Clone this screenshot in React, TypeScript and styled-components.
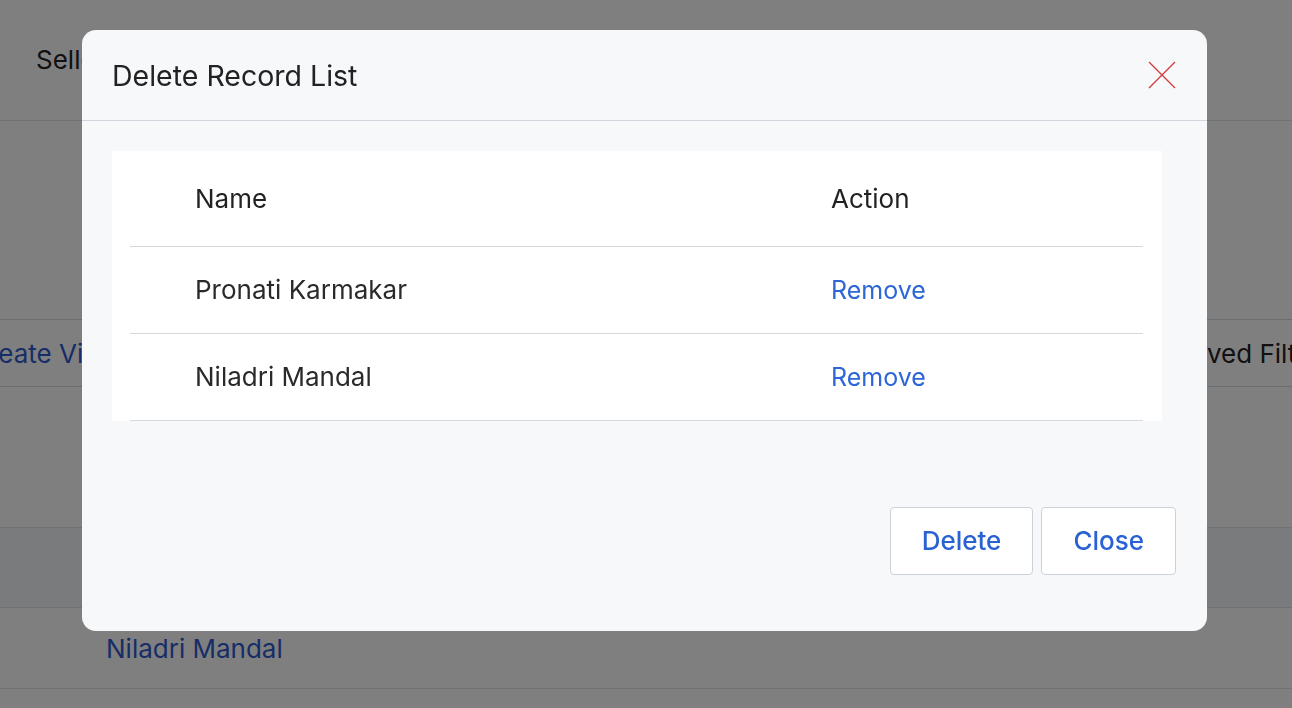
import React from "react";
import styled, { createGlobalStyle } from "styled-components";

const GlobalStyle = createGlobalStyle`
  html, body {
    margin: 0;
    padding: 0;
    overflow: hidden;
    background: #ffffff;
    font-family: Inter, "Noto Sans", "Liberation Sans", sans-serif;
    color: #222;
  }
  * {
    box-sizing: border-box;
  }
`;

const Page = styled.div`
  width: 1292px;
  height: 708px;
  overflow: hidden;
`;

const PageHeader = styled.div`
  height: 121px;
  padding: 44px 0 0 36px;
  border-bottom: 1px solid #dfe3e7;
  font-size: 26px;
`;

const Toolbar = styled.div`
  display: flex;
  justify-content: space-between;
  margin: 198px -54px 0 -55px;
`;

const ToolButton = styled.button<{ $link?: boolean }>`
  height: 68px;
  padding: 0 24px;
  background: #fff;
  border: 1px solid #d6dadf;
  border-radius: 4px;
  font-family: inherit;
  font-size: 26px;
  white-space: nowrap;
  color: ${(p) => (p.$link ? "#2f5bd0" : "#222")};
`;

const ListTable = styled.div`
  margin-top: 140px;
  border-top: 1px solid #dfe3e7;
`;

const ListHead = styled.div`
  height: 80px;
  background: #f4f7f9;
  border-bottom: 1px solid #dfe3e7;
`;

const ListRow = styled.div`
  height: 81px;
  display: flex;
  align-items: center;
  padding-left: 106px;
  border-bottom: 1px solid #dfe3e7;
  font-size: 26px;
  color: #2f5bd0;
`;

const Overlay = styled.div`
  position: fixed;
  inset: 0;
  background: rgba(0, 0, 0, 0.5);
  display: flex;
  align-items: flex-start;
  justify-content: flex-start;
  padding: 30px 0 0 82px;
`;

const Modal = styled.div`
  width: 1125px;
  background: #f7f8fa;
  border-radius: 14px;
  overflow: hidden;
`;

const ModalHeader = styled.div`
  height: 91px;
  display: flex;
  align-items: center;
  justify-content: space-between;
  padding: 0 31px 0 30px;
  border-bottom: 1px solid #cfd6de;
`;

const Title = styled.h2`
  margin: 0;
  font-size: 28.5px;
  font-weight: 400;
  color: #222;
`;

const CloseIcon = styled.button`
  width: 28px;
  height: 28px;
  padding: 0;
  border: none;
  background: transparent;
  display: flex;
  cursor: pointer;
`;

const ModalBody = styled.div`
  padding: 30px 45px 0 30px;
`;

const Card = styled.div`
  background: #fff;
  padding: 0 19px 0 18px;
`;

const Table = styled.table`
  width: 100%;
  border-collapse: collapse;
  font-size: 26px;
`;

const Th = styled.th<{ $w?: number }>`
  height: 95px;
  text-align: left;
  font-weight: 400;
  color: #222;
  padding: 0 0 0 ${(p) => (p.$w ? 65 : 0)}px;
  width: ${(p) => (p.$w ? `${p.$w}px` : "auto")};
  border-bottom: 1px solid #d5d9dd;
`;

const Td = styled.td<{ $first?: boolean }>`
  height: 87px;
  padding: 0 0 0 ${(p) => (p.$first ? 65 : 0)}px;
  color: #2a2a2a;
  border-bottom: 1px solid #d5d9dd;
`;

const LinkText = styled.a`
  font-size: 25px;
  color: #2d66d6;
  text-decoration: none;
  cursor: pointer;
`;

const Footer = styled.div`
  display: flex;
  justify-content: flex-end;
  gap: 8px;
  padding: 86px 31px 56px 30px;
`;

const ActionButton = styled.button`
  height: 68px;
  padding: 0 31px;
  background: #fff;
  border: 1px solid #cdd1d8;
  border-radius: 4px;
  font-family: inherit;
  font-size: 26px;
  font-weight: 500;
  color: #2a62d4;
  cursor: pointer;
`;

const records = ["Pronati Karmakar", "Niladri Mandal"];

export default function App() {
  return (
    <>
      <GlobalStyle />
      <Page>
        <PageHeader>Seller List</PageHeader>
        <Toolbar>
          <ToolButton $link>Create View</ToolButton>
          <ToolButton>Saved Filter</ToolButton>
        </Toolbar>
        <ListTable>
          <ListHead />
          <ListRow>Niladri Mandal</ListRow>
        </ListTable>
      </Page>
      <Overlay>
        <Modal>
          <ModalHeader>
            <Title>Delete Record List</Title>
            <CloseIcon aria-label="Close">
              <svg width="28" height="28" viewBox="0 0 28 28">
                <path d="M1 1 L27 27 M27 1 L1 27" stroke="#d0393b" strokeWidth="1.3" fill="none" />
              </svg>
            </CloseIcon>
          </ModalHeader>
          <ModalBody>
            <Card>
              <Table>
                <thead>
                  <tr>
                    <Th $w={701}>Name</Th>
                    <Th>Action</Th>
                  </tr>
                </thead>
                <tbody>
                  {records.map((r) => (
                    <tr key={r}>
                      <Td $first>{r}</Td>
                      <Td>
                        <LinkText>Remove</LinkText>
                      </Td>
                    </tr>
                  ))}
                </tbody>
              </Table>
            </Card>
          </ModalBody>
          <Footer>
            <ActionButton>Delete</ActionButton>
            <ActionButton>Close</ActionButton>
          </Footer>
        </Modal>
      </Overlay>
    </>
  );
}
